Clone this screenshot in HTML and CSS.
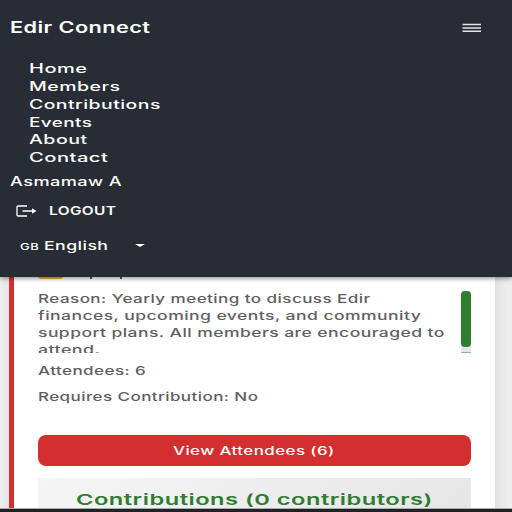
FILE: index.html
```
<!DOCTYPE html>
<html lang="en">
<head>
<meta charset="utf-8">
<title>Edir Connect</title>
<link rel="stylesheet" href="styles.css">
</head>
<body>
<header class="menu">
  <div class="brand-row">
    <span class="t brand">Edir Connect</span>
    <svg class="burger" width="20" height="10" viewBox="0 0 20 10"><path d="M.5 1.500h18.500M.5 4.900h18.500M.5 8.300h18.500" stroke="#e4e5e7" stroke-width="1.5"/></svg>
  </div>
  <nav>
    <a class="t home">Home</a>
    <a class="t members">Members</a>
    <a class="t contributions">Contributions</a>
    <a class="t events">Events</a>
    <a class="t about">About</a>
    <a class="t contact">Contact</a>
  </nav>
  <div class="user"><span class="t asmamaw">Asmamaw A</span></div>
  <div class="logout-row">
    <svg width="21" height="12" viewBox="0 0 21 12" fill="none" stroke="#fff" stroke-width="1.300"><path d="M11 1H2.200Q1 1 1 2v8q0 1 1.200 1H11M6.500 6H19"/><path d="M16 3.300L20.500 6 16 8.700z" fill="#fff" stroke="none"/></svg>
    <span class="t logout">LOGOUT</span>
  </div>
  <div class="lang-row">
    <span class="t gb">GB</span>
    <span class="t english">English</span>
    <i class="caret"></i>
  </div>
</header>
<main>
  <article class="card">
    <div class="date"><i class="chip"></i><span class="tail"></span><span class="tail second"></span></div>
    <div class="reason">
      <p>
        <span class="t r1">Reason: Yearly meeting to discuss Edir</span>
        <span class="t r2">finances, upcoming events, and community</span>
        <span class="t r3">support plans. All members are encouraged to</span>
        <span class="t r4">attend.</span>
      </p>
      <div class="track"><div class="thumb"></div></div>
    </div>
    <div class="info"><span class="t attendees">Attendees: 6</span></div>
    <div class="info"><span class="t requires">Requires Contribution: No</span></div>
    <button><span class="t view">View Attendees (6)</span></button>
    <section><h2 class="t">Contributions (0 contributors)</h2></section>
  </article>
</main>
<footer></footer>
</body>
</html>
```
FILE: styles.css
```
* { box-sizing: border-box; }
body {
  margin: 0;
  width: 512px;
  height: 512px;
  overflow: hidden;
  position: relative;
  background: #eee;
  font-family: Inter, "Liberation Sans", sans-serif;
}
/* wide lettering: each label is stretched from its left edge */
.t {
  display: block;
  width: max-content;
  white-space: nowrap;
  letter-spacing: .3px;
  transform: scaleX(var(--k));
  transform-origin: 0 50%;
}
.menu {
  position: absolute;
  z-index: 2;
  top: 0;
  left: 0;
  width: 512px;
  height: 277px;
  padding-top: 18.2px;
  background: #282c34;
  color: #fff;
  box-shadow: 0 1px 5px rgba(0, 0, 0, .5);
}
.brand-row {
  display: flex;
  justify-content: space-between;
  align-items: center;
  height: 20px;
  padding: 0 30px 0 9.800px;
}
.brand { --k: 1.4; font-size: 15.5px; font-weight: 600; line-height: 20px; }
nav { margin: 22px 0 0 29px; font-size: 12.8px; line-height: 17.8px; font-weight: 450; }
.home { --k: 1.565; }
.members { --k: 1.525; }
.contributions { --k: 1.517; }
.events { --k: 1.475; }
.about { --k: 1.53; }
.contact { --k: 1.575; }
.user { margin: 6.2px 0 0 9.800px; font-size: 12.8px; line-height: 18px; font-weight: 450; }
.asmamaw { --k: 1.42; }
.logout-row {
  display: flex;
  align-items: center;
  gap: 11.500px;
  height: 20px;
  margin-top: 9.600px;
  padding-left: 16px;
}
.logout { --k: 1.285; font-size: 12px; font-weight: 600; line-height: 20px; }
.lang-row {
  display: grid;
  grid-template-columns: 24.800px 90.700px 10px;
  align-items: center;
  height: 20px;
  margin-top: 14px;
  padding-left: 19.500px;
}
.gb { --k: 1.53; font-size: 8.5px; font-weight: 500; line-height: 20px; padding-top: 2px; }
.english { --k: 1.44; font-size: 12.3px; font-weight: 500; line-height: 20px; }
.caret { border: 5px solid transparent; border-top: 3.500px solid #fff; border-bottom: 0; }
main {
  height: 508px;
  padding: 0 17px 0 9px;
  background: linear-gradient(90deg, #eee 0, #e4e4e4 9px, #e2e2e2 495px, #eee 508px);
}
.card {
  height: 508px;
  padding: 268px 24px 0 24px;
  border-left: 5px solid #d32f2f;
  background: #fff;
  color: #5f5f5f;
  font-size: 12px;
  font-weight: 450;
}
.date { display: flex; height: 23px; }
.chip { width: 25px; height: 11px; border-radius: 3px; background: #f0b41e; }
.tail { width: 2px; height: 10.500px; margin-left: 27px; background: #555; }
.tail.second { margin-left: 28px; }
.reason { display: flex; justify-content: space-between; height: 62px; overflow: hidden; }
.reason p { margin: -1px 0 0 -.5px; line-height: 17px; }
.r1 { --k: 1.423; }
.r2 { --k: 1.462; }
.r3 { --k: 1.461; }
.r4 { --k: 1.485; }
.track { width: 11px; height: 62px; margin-right: -1px; background: #e6e6e6; border-right: 1px solid #55995a; border-bottom: 1px solid #86b888; }
.thumb { height: 56px; border-radius: 4px; background: #2e7d32; }
.info { height: 18px; margin: 8.600px 0 0 -.5px; line-height: 18px; }
.attendees { --k: 1.42; }
.requires { --k: 1.417; }
button {
  display: flex;
  align-items: center;
  width: 433px;
  height: 31px;
  margin-top: 28.800px;
  padding: 1px 0 0 135px;
  border: 0;
  border-radius: 8px;
  background: #d32f2f;
  color: #fff;
  font: 500 11.5px Inter, sans-serif;
}
.view { --k: 1.468; }
section {
  width: 433px;
  height: 30px;
  margin-top: 12px;
  padding: 12.400px 0 0 37.500px;
  background: linear-gradient(135deg, #f5f5f5, #e6e6e6);
}
h2 { --k: 1.579; margin: 0; font-size: 15px; font-weight: 600; line-height: 20px; color: #2e7d32; }
footer { height: 4px; background: #202124; border-top: 1px solid #aaa; }
```
